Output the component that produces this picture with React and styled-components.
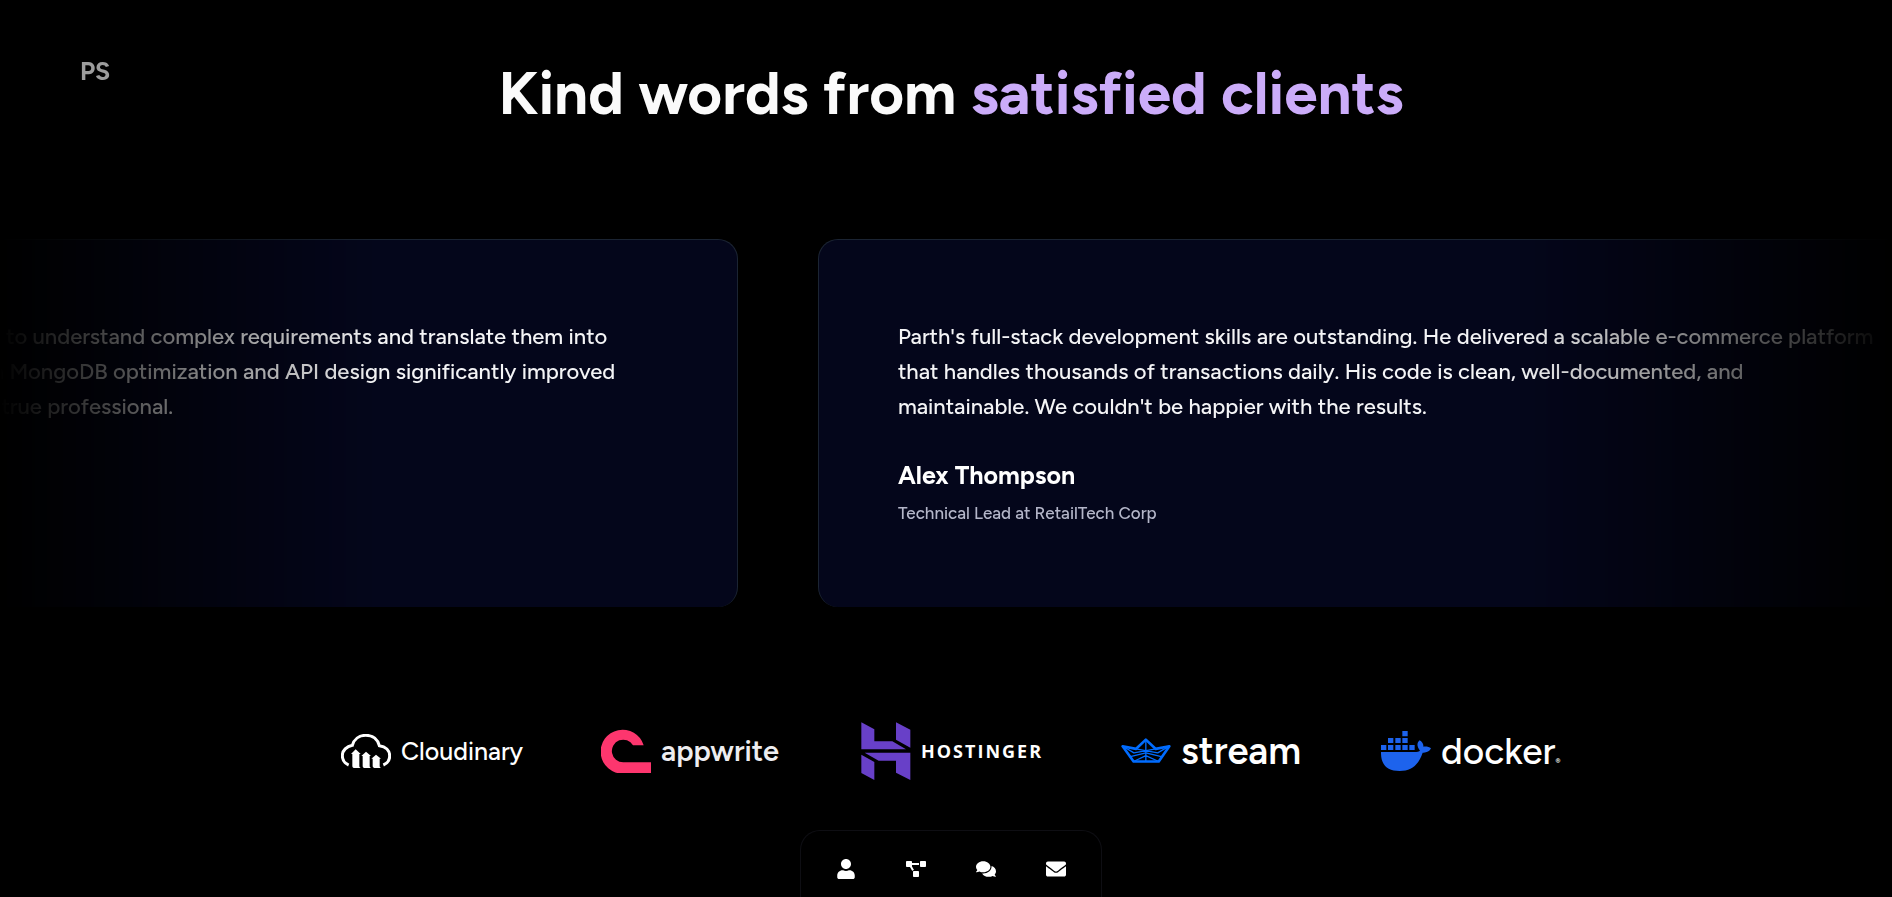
import React from "react";
import styled, { createGlobalStyle } from "styled-components";
import { FaUser, FaProjectDiagram, FaComments, FaEnvelope } from "react-icons/fa";

const GlobalStyle = createGlobalStyle`
  * { box-sizing: border-box; }
  body {
    margin: 0;
    background: #000;
    color: #fff;
    font-family: Figtree, Lato, "Liberation Sans", sans-serif;
    overflow: hidden;
  }
`;

const Page = styled.main`
  min-height: 100vh;
  padding-top: 57px;
  overflow: hidden;
`;

const Brand = styled.a`
  position: fixed;
  top: 56px;
  left: 80px;
  color: #9c9c9c;
  font-size: 25px;
  font-weight: 700;
  line-height: 30px;
  text-decoration: none;
`;

const Heading = styled.h1`
  margin: 0;
  padding-left: 10px;
  text-align: center;
  color: #fafafa;
  font-size: 60px;
  font-weight: 700;
  line-height: 72px;
`;

const Accent = styled.span`
  color: #cbacf9;
`;

const Marquee = styled.div`
  margin-top: 110px;
  overflow: hidden;
  mask-image: linear-gradient(to right, transparent, #fff 20%, #fff 80%, transparent);
`;

const Track = styled.ul`
  display: flex;
  gap: 80px;
  width: max-content;
  margin: 0 0 0 -21vw;
  padding: 0;
  list-style: none;
`;

const Card = styled.li`
  width: 60vw;
  padding: 79px 79px 81px;
  border: 1px solid #1b2433;
  border-bottom: 0;
  border-radius: 20px;
  background: #04061b;
`;

const Quote = styled.blockquote`
  margin: 0;
  color: #f4f4f6;
  font-size: 22px;
  font-weight: 500;
  line-height: 35px;
  white-space: nowrap;
`;

const Line = styled.span`
  display: block;
`;

const Name = styled.h2`
  margin: 32px 0 6px;
  font-size: 25px;
  font-weight: 700;
  line-height: 38px;
`;

const Role = styled.p`
  margin: 0;
  color: #b4b6c9;
  font-size: 17px;
  font-weight: 500;
  line-height: 26px;
`;

const Companies = styled.ul`
  display: flex;
  justify-content: center;
  gap: 80px;
  margin: 115px 0 0;
  padding: 0 0 0 10px;
  list-style: none;
`;

const Company = styled.li`
  display: flex;
  align-items: center;
  gap: 10px;
  width: 180px;
  height: 58px;
  svg { flex: none; width: 50px; }
`;

const Wordmark = styled.span`
  color: ${(p) => p.$color || "#fff"};
  font-family: ${(p) => p.$font || "Figtree, Lato"}, sans-serif;
  font-size: ${(p) => p.$size}px;
  font-weight: ${(p) => p.$weight || 500};
  letter-spacing: ${(p) => (p.$spaced ? "2px" : "normal")};
  line-height: 40px;
  white-space: nowrap;
`;

const Registered = styled.sub`
  font-size: 8px;
  line-height: 8px;
  vertical-align: baseline;
`;

const Dock = styled.nav`
  position: fixed;
  bottom: 0;
  left: calc(50% + 5px);
  transform: translateX(-50%);
  display: flex;
  gap: 50px;
  height: 67px;
  padding: 28px 35px 0;
  border: 1px solid #0e0e13;
  border-bottom: 0;
  border-radius: 20px 20px 0 0;
  background: #000;
`;

const DockLink = styled.a`
  display: flex;
  width: 20px;
  height: 20px;
  align-items: center;
  justify-content: center;
  color: #fff;
  font-size: 20px;
  svg { flex: none; }
`;

const CloudinaryIcon = () => (
  <svg viewBox="33 75 150 102" aria-hidden="true">
    <path
      d="M56 168C42 162 37 153 37 140C37 124 50 112 67 109C72 91 87 79 107 79C128 79 143 91 148 110C167 112 179 124 179 141C179 154 172 163 160 168"
      fill="none" stroke="#fff" strokeWidth="9"
    />
    <path
      d="M77 121L92 135H88V172Q88 175 92 177H71Q67 176 67 172V135H63ZM108 128L123 141H119V172Q119 175 123 177H102Q98 176 98 172V141H94ZM138 137L153 149H149V172Q149 175 153 177H133Q128 176 128 172V149H124Z"
      fill="#fff"
    />
  </svg>
);

const AppwriteIcon = () => (
  <svg viewBox="813 58 150 134" aria-hidden="true">
    <path d="M963 192H880A66 66 0 1 1 941 107H909A34 34 0 1 0 880 158H963Z" fill="#fd366e" />
  </svg>
);

const HostingerIcon = () => (
  <svg viewBox="32 40 150 175" aria-hidden="true">
    <path
      d="M33 41L72 62V98H126L167 122H33ZM137 41L180 63V117L137 93ZM43 132H180V214L137 192V156H85ZM33 138L72 160V214L33 193Z"
      fill="#6840c8"
    />
  </svg>
);

const StreamIcon = () => (
  <svg viewBox="813 91 151 76" aria-hidden="true">
    <g fill="none" stroke="#006cff" strokeLinejoin="round">
      <path d="M818 116L858 124L888 96L918 124L959 116L927 162H851Z" strokeWidth="8" />
      <path d="M888 95V163M817 115L852 136L918 124M960 115L924 136L858 124M838 148L888 136L938 148M851 162L888 144L927 162" strokeWidth="4" />
    </g>
  </svg>
);

const DockerIcon = () => (
  <svg viewBox="813 66 150 121" aria-hidden="true">
    <path
      d="M877 66h16v16h-16zM834 87h16v15h-16zM856 87h16v15h-16zM877 87h16v15h-16zM813 108h16v15h-16zM834 108h16v15h-16zM856 108h16v15h-16zM877 108h16v15h-16zM898 108h16v15h-16zM813 129H912C922 129 928 127 930 125C920 113 920 102 929 94C938 100 941 107 940 113C950 112 958 114 963 118C959 128 948 132 938 131C926 167 905 186 869 186C830 186 812 166 813 129Z"
      fill="#1d63ed"
    />
  </svg>
);

const testimonials = [
  {
    lines: [
      "Parth shows a remarkable ability to understand complex requirements and translate them into",
      "robust solutions. His expertise in MongoDB optimization and API design significantly improved",
      "our team's performance. He is a true professional.",
    ],
  },
  {
    lines: [
      "Parth's full-stack development skills are outstanding. He delivered a scalable e-commerce platform",
      "that handles thousands of transactions daily. His code is clean, well-documented, and",
      "maintainable. We couldn't be happier with the results.",
    ],
    name: "Alex Thompson",
    role: "Technical Lead at RetailTech Corp",
  },
];

const dockItems = [
  { label: "About", Icon: FaUser },
  { label: "Projects", Icon: FaProjectDiagram },
  { label: "Testimonials", Icon: FaComments },
  { label: "Contact", Icon: FaEnvelope },
];

export default function App() {
  return (
    <>
      <GlobalStyle />
      <Page>
        <Brand href="#home">PS</Brand>
        <Heading>
          Kind words from <Accent>satisfied clients</Accent>
        </Heading>
        <Marquee>
          <Track>
            {testimonials.map((t) => (
              <Card key={t.lines[0]}>
                <Quote>
                  {t.lines.map((line) => (
                    <Line key={line}>{line}</Line>
                  ))}
                </Quote>
                {t.name && <Name>{t.name}</Name>}
                {t.role && <Role>{t.role}</Role>}
              </Card>
            ))}
          </Track>
        </Marquee>
        <Companies>
          <Company>
            <CloudinaryIcon />
            <Wordmark $size={25}>Cloudinary</Wordmark>
          </Company>
          <Company>
            <AppwriteIcon />
            <Wordmark $size={29} $weight={600} $color="#ededf0">appwrite</Wordmark>
          </Company>
          <Company>
            <HostingerIcon />
            <Wordmark $size={18} $weight={700} $font="Open Sans" $spaced>HOSTINGER</Wordmark>
          </Company>
          <Company>
            <StreamIcon />
            <Wordmark $size={38} $weight={600}>stream</Wordmark>
          </Company>
          <Company>
            <DockerIcon />
            <Wordmark $size={37}>docker<Registered>®</Registered></Wordmark>
          </Company>
        </Companies>
      </Page>
      <Dock aria-label="Sections">
        {dockItems.map(({ label, Icon }) => (
          <DockLink key={label} href={`#${label.toLowerCase()}`} aria-label={label}>
            <Icon />
          </DockLink>
        ))}
      </Dock>
    </>
  );
}
